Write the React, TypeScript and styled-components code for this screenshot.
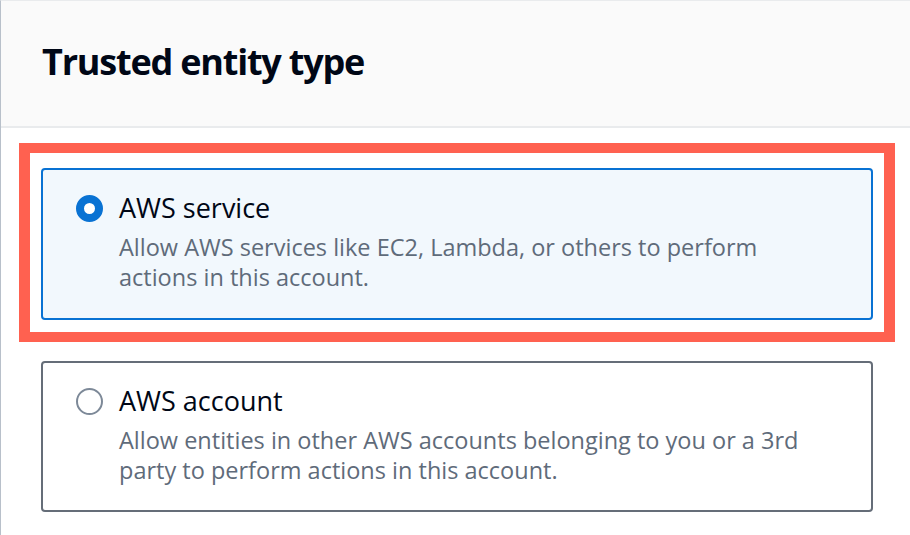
import React from "react";
import styled, { createGlobalStyle } from "styled-components";

const Global = createGlobalStyle`
  html, body {
    margin: 0;
    padding: 0;
    background: #ffffff;
  }
  body {
    font-family: "Open Sans", "Noto Sans", Arial, sans-serif;
    color: #000716;
    -webkit-font-smoothing: antialiased;
  }
`;

const Container = styled.section`
  width: 910px;
  height: 535px;
  box-sizing: border-box;
  border-left: 1px solid #b8c0ca;
  border-top: 1px solid #e9ebed;
  background: #ffffff;
  overflow: hidden;
`;

const Header = styled.header`
  height: 127px;
  box-sizing: border-box;
  padding: 39px 0 0 41px;
  background: #fafafa;
  border-bottom: 2px solid #e9ebed;
`;

const Title = styled.h2`
  margin: 0;
  font-size: 36px;
  line-height: 44px;
  font-weight: 700;
  letter-spacing: -1.2px;
  color: #000716;
`;

const Body = styled.div`
  display: flex;
  flex-direction: column;
  gap: 19px;
  padding: 15px 0 0 18px;
`;

const Highlight = styled.div`
  width: 876px;
  box-sizing: border-box;
  border-style: solid;
  border-color: #ff6150;
  border-width: 10px 11px;
  padding: 15px 11px 12px 11px;
  background: #ffffff;
`;

const Plain = styled.div`
  padding: 0 22px 0 22px;
  width: 876px;
  box-sizing: border-box;
`;

const Card = styled.label<{ $checked?: boolean }>`
  display: flex;
  align-items: flex-start;
  gap: 16px;
  box-sizing: border-box;
  padding: ${(p) => (p.$checked ? "20px 20px 26px 33px" : "20px 20px 25px 33px")};
  border: 2px solid ${(p) => (p.$checked ? "#0972d3" : "#656d78")};
  border-radius: 4px;
  background: ${(p) => (p.$checked ? "#f2f8fd" : "#ffffff")};
  cursor: pointer;
`;

const RadioWrap = styled.span`
  display: flex;
  align-items: center;
  height: 36px;
  flex: none;
`;

const Radio = styled.span<{ $checked?: boolean }>`
  display: block;
  box-sizing: border-box;
  width: 27px;
  height: 27px;
  border-radius: 50%;
  border: ${(p) => (p.$checked ? "8.5px solid #0972d3" : "2.5px solid #7d8998")};
  background: #ffffff;
`;

const Text = styled.span`
  display: flex;
  flex-direction: column;
  gap: 6px;
`;

const Label = styled.span`
  font-size: 27px;
  line-height: 36px;
  color: #000716;
`;

const Description = styled.span`
  font-size: 23.5px;
  line-height: 30px;
  color: #5f6b7a;
`;

type Option = {
  label: string;
  description: React.ReactNode;
  checked: boolean;
};

function OptionCard({ label, description, checked }: Option) {
  return (
    <Card $checked={checked}>
      <RadioWrap>
        <Radio $checked={checked} />
      </RadioWrap>
      <Text>
        <Label>{label}</Label>
        <Description>{description}</Description>
      </Text>
    </Card>
  );
}

export default function App() {
  return (
    <>
      <Global />
      <Container>
        <Header>
          <Title>Trusted entity type</Title>
        </Header>
        <Body>
          <Highlight>
            <OptionCard
              checked
              label="AWS service"
              description={
                <>
                  Allow AWS services like EC2, Lambda, or others to perform
                  <br />
                  actions in this account.
                </>
              }
            />
          </Highlight>
          <Plain>
            <OptionCard
              checked={false}
              label="AWS account"
              description={
                <>
                  Allow entities in other AWS accounts belonging to you or a 3rd
                  <br />
                  party to perform actions in this account.
                </>
              }
            />
          </Plain>
        </Body>
      </Container>
    </>
  );
}
